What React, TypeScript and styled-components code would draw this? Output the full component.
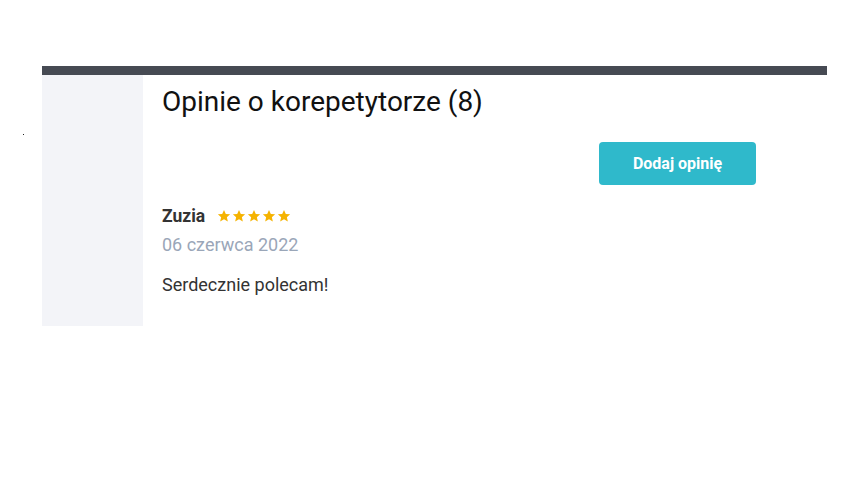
import React from 'react';
import styled, { createGlobalStyle } from 'styled-components';

const GlobalStyle = createGlobalStyle`
  html, body {
    margin: 0;
    padding: 0;
    background: #ffffff;
    font-family: Roboto, 'Liberation Sans', sans-serif;
  }
`;

const Page = styled.div`
  display: flex;
  padding-top: 66px;
  width: 866px;
  height: 487px;
  box-sizing: border-box;
`;

const Gutter = styled.div`
  width: 42px;
  flex-shrink: 0;
  padding-top: 68px;
  box-sizing: border-box;

  span {
    display: block;
    width: 1px;
    height: 1px;
    margin-left: 23px;
    background: #222;
  }
`;

const Section = styled.section`
  width: 785px;
`;

const TopBar = styled.div`
  height: 9px;
  background-color: #464a53;
`;

const Body = styled.div`
  display: flex;
  height: 251px;
`;

const Sidebar = styled.div`
  width: 101px;
  flex-shrink: 0;
  background-color: #f3f4f8;
`;

const Content = styled.div`
  flex: 1;
  padding: 10px 71px 0 19px;
  display: flex;
  flex-direction: column;
`;

const Title = styled.h2`
  margin: 0;
  font-size: 28px;
  font-weight: 400;
  line-height: 34px;
  color: #111;
`;

const Actions = styled.div`
  display: flex;
  justify-content: flex-end;
  margin-top: 23px;
`;

const AddButton = styled.button`
  width: 157px;
  height: 43px;
  border: none;
  border-radius: 4px;
  background-color: #2fb9cb;
  color: #fff;
  font-family: Roboto, 'Liberation Sans', sans-serif;
  font-weight: 700;
  font-size: 16px;
  cursor: pointer;
`;

const Review = styled.div`
  margin-top: 19px;
`;

const ReviewHead = styled.div`
  display: flex;
  align-items: center;
  gap: 12px;
  height: 24px;
`;

const Author = styled.span`
  font-size: 17.5px;
  font-weight: 700;
  color: #333;
`;

const Stars = styled.div`
  display: flex;
  gap: 1px;
  svg {
    display: block;
  }
`;

const DateText = styled.div`
  margin-top: 6px;
  font-size: 18px;
  color: #9aa6b8;
  line-height: 22px;
`;

const Text = styled.p`
  margin: 18px 0 0;
  font-size: 18px;
  color: #333;
  line-height: 22px;
`;

const Star = () => (
  <svg width="14" height="14" viewBox="0 0 24 24">
    <path
      fill="#f5b301"
      d="M12 1.5l3.1 6.9 7.4.7-5.6 5 1.7 7.4L12 17.6l-6.6 3.9 1.7-7.4-5.6-5 7.4-.7z"
    />
  </svg>
);

const App: React.FC = () => {
  return (
    <>
      <GlobalStyle />
      <Page>
        <Gutter>
          <span />
        </Gutter>
        <Section>
          <TopBar />
          <Body>
            <Sidebar />
            <Content>
              <Title>Opinie o korepetytorze (8)</Title>
              <Actions>
                <AddButton>Dodaj opinię</AddButton>
              </Actions>
              <Review>
                <ReviewHead>
                  <Author>Zuzia</Author>
                  <Stars>
                    {[0, 1, 2, 3, 4].map((i) => (
                      <Star key={i} />
                    ))}
                  </Stars>
                </ReviewHead>
                <DateText>06 czerwca 2022</DateText>
                <Text>Serdecznie polecam!</Text>
              </Review>
            </Content>
          </Body>
        </Section>
      </Page>
    </>
  );
};

export default App;
